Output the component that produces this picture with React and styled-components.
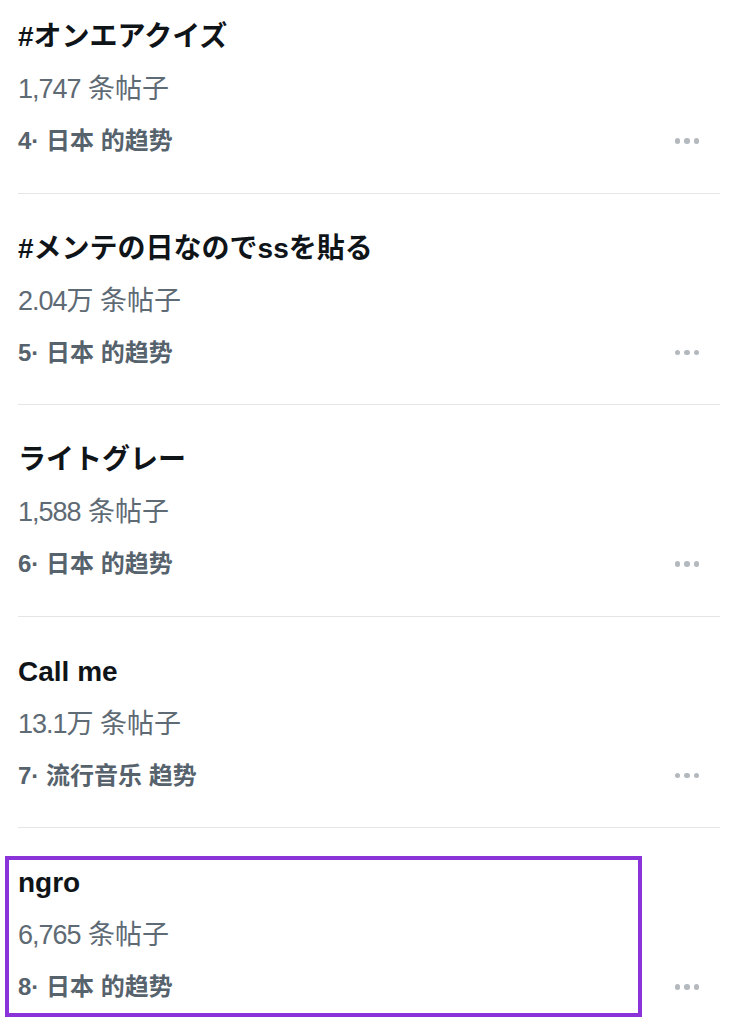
import React from "react";
import styled, { createGlobalStyle } from "styled-components";

const Global = createGlobalStyle`
  html, body { margin: 0; padding: 0; background: #ffffff; }
  body {
    font-family: "Liberation Sans", "Noto Sans CJK SC", "Noto Sans CJK JP", sans-serif;
    -webkit-font-smoothing: antialiased;
  }
`;

const List = styled.div`
  width: 735px;
  height: 1024px;
  overflow: hidden;
  display: flex;
  flex-direction: column;
  padding: 0 15px 0 18px;
  box-sizing: border-box;
`;

const Item = styled.div`
  display: flex;
  align-items: flex-end;
  padding-top: ${(p) => (p.$first ? 11 : 29)}px;
  padding-bottom: 25.5px;
  border-bottom: ${(p) => (p.$last ? "none" : "1px solid #e3e5e7")};
  flex-shrink: 0;
`;

const Content = styled.div`
  flex: 1;
  display: flex;
  flex-direction: column;
  position: relative;

  ${(p) =>
    p.$highlight &&
    `
    &::after {
      content: "";
      position: absolute;
      top: -1px;
      bottom: -4px;
      left: -13px;
      right: 25px;
      border: 4.5px solid #8a33d9;
      pointer-events: none;
    }
  `}
`;

const Title = styled.div`
  height: 52px;
  line-height: 52px;
  font-size: 28px;
  font-weight: 700;
  color: #0f1419;
  white-space: nowrap;
`;

const Count = styled.div`
  height: 52px;
  line-height: 52px;
  font-size: 27px;
  color: #5e6a74;
  white-space: nowrap;
`;

const Num = styled.span`
  letter-spacing: -1px;
`;

const Rank = styled.div`
  height: 52px;
  line-height: 52px;
  font-size: 24px;
  font-weight: 700;
  color: #56626c;
  white-space: nowrap;
`;

const More = styled.div`
  width: 40px;
  height: 52px;
  margin-right: 13px;
  display: flex;
  align-items: center;
  justify-content: center;
  gap: 4px;
`;

const Dot = styled.span`
  width: 5.5px;
  height: 5.5px;
  border-radius: 50%;
  background: #b4b9be;
`;

const trends = [
  { title: "#オンエアクイズ", num: "1,747", unit: " 条帖子", rank: "4", where: "日本 的趋势" },
  { title: "#メンテの日なのでssを貼る", num: "2.04万", unit: " 条帖子", rank: "5", where: "日本 的趋势" },
  { title: "ライトグレー", num: "1,588", unit: " 条帖子", rank: "6", where: "日本 的趋势" },
  { title: "Call me", num: "13.1万", unit: " 条帖子", rank: "7", where: "流行音乐 趋势" },
  { title: "ngro", num: "6,765", unit: " 条帖子", rank: "8", where: "日本 的趋势", highlight: true },
];

export default function App() {
  return (
    <>
      <Global />
      <List>
        {trends.map((t, i) => (
          <Item key={i} $first={i === 0} $last={i === trends.length - 1}>
            <Content $highlight={t.highlight}>
              <Title>{t.title}</Title>
              <Count>
                <Num>{t.num}</Num>
                {t.unit}
              </Count>
              <Rank>
                {t.rank}· {t.where}
              </Rank>
            </Content>
            <More>
              <Dot />
              <Dot />
              <Dot />
            </More>
          </Item>
        ))}
      </List>
    </>
  );
}
